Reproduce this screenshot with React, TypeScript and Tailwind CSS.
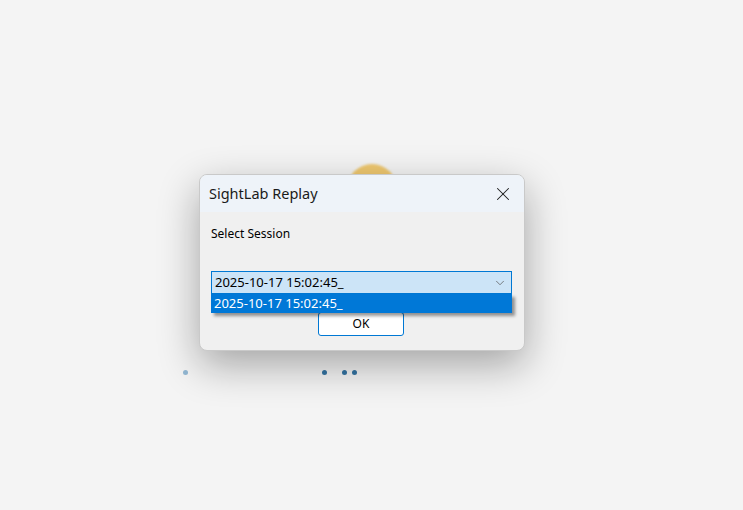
import { ChevronDown, X } from 'lucide-react';

const sessions = ['2025-10-17 15:02:45_'];

function SessionCombo() {
  return (
    <div className="relative mt-[28px] w-[301px]">
      <div className="flex h-[23px] items-center justify-between border border-[#0078d4] bg-[#cce4f7] pl-[3px] pr-[4px]">
        <span className="text-[13px] text-black">{sessions[0]}</span>
        <ChevronDown className="h-[14px] w-[14px] text-[#555]" strokeWidth={1.25} />
      </div>
      <ul className="absolute left-0 top-[23px] z-10 w-[301px] shadow-[3px_3px_3px_rgba(0,0,0,0.4)]">
        {sessions.map((s) => (
          <li key={s} className="flex h-[19px] items-center bg-[#0078d7] pl-[3px] text-[13px] text-white">
            {s}
          </li>
        ))}
      </ul>
    </div>
  );
}

export default function App() {
  return (
    <div
      className="relative h-[510px] w-full overflow-hidden bg-[#f4f4f4]"
      style={{ fontFamily: '"Noto Sans", "Open Sans", sans-serif' }}
    >
      {/* splash screen behind the dialog */}
      <div className="absolute left-[347px] top-[164px] h-[50px] w-[50px] rounded-full bg-[#efc870] blur-[1px]" />
      <div className="absolute left-[183px] top-[370px] flex items-center">
        <span className="h-[5px] w-[5px] rounded-full bg-[#93b8d3]" />
        <span className="ml-[134px] h-[5px] w-[5px] rounded-full bg-[#3474a3]" />
        <span className="ml-[15px] h-[5px] w-[5px] rounded-full bg-[#3474a3]" />
        <span className="ml-[5px] h-[5px] w-[5px] rounded-full bg-[#3474a3]" />
      </div>

      <div className="relative pl-[199px] pt-[174px]">
        <section className="w-[326px] overflow-hidden rounded-[8px] border border-[#c9c9c9] bg-[#f0f0f0] shadow-[0_14px_40px_rgba(0,0,0,0.33)]">
          <header className="flex h-[37px] items-center justify-between bg-[#eef3f9] pl-[9px] pr-[10px]">
            <h1 className="text-[14.5px] text-[#1a1a1a]">SightLab Replay</h1>
            <X className="h-[22px] w-[22px] text-[#1a1a1a]" strokeWidth={1.1} />
          </header>
          <div className="px-[11px] pb-[14px] pt-[13px]">
            <p className="text-[12px] text-black">Select Session</p>
            <SessionCombo />
            <div className="mt-[18px] flex justify-center pr-[2px]">
              <button className="h-[24px] w-[86px] rounded-[3px] border border-[#0078d4] bg-white text-[12px] text-black">
                OK
              </button>
            </div>
          </div>
        </section>
      </div>
    </div>
  );
}
